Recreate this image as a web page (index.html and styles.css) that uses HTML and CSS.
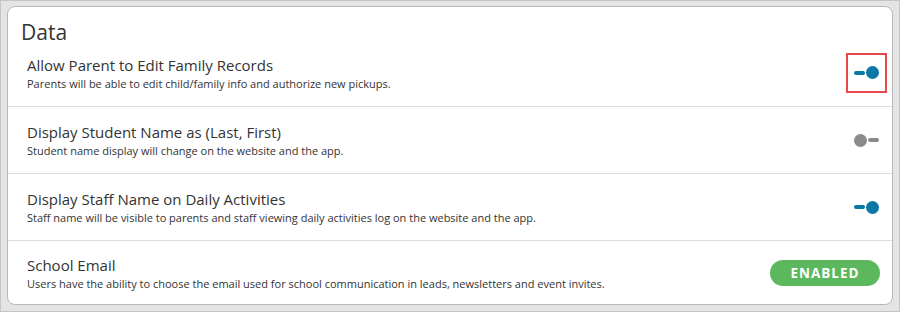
FILE: index.html
```html
<!DOCTYPE html>
<html>
<head>
<meta charset="utf-8">
<link rel="stylesheet" href="styles.css">
</head>
<body>
<div class="frame">
  <div class="card">
    <h2 class="title">Data</h2>
    <div class="row first">
      <div class="text">
        <div class="name">Allow Parent to Edit Family Records</div>
        <div class="desc">Parents will be able to edit child/family info and authorize new pickups.</div>
      </div>
      <div class="ctrl highlight">
        <span class="toggle on"><span class="bar"></span><span class="knob"></span></span>
      </div>
    </div>
    <div class="row">
      <div class="text">
        <div class="name">Display Student Name as (Last, First)</div>
        <div class="desc">Student name display will change on the website and the app.</div>
      </div>
      <div class="ctrl">
        <span class="toggle off"><span class="knob"></span><span class="bar"></span></span>
      </div>
    </div>
    <div class="row">
      <div class="text">
        <div class="name">Display Staff Name on Daily Activities</div>
        <div class="desc">Staff name will be visible to parents and staff viewing daily activities log on the website and the app.</div>
      </div>
      <div class="ctrl">
        <span class="toggle on"><span class="bar"></span><span class="knob"></span></span>
      </div>
    </div>
    <div class="row last">
      <div class="text">
        <div class="name">School Email</div>
        <div class="desc">Users have the ability to choose the email used for school communication in leads, newsletters and event invites.</div>
      </div>
      <div class="btnwrap">
        <span class="badge">ENABLED</span>
      </div>
    </div>
  </div>
</div>
</body>
</html>
```
FILE: styles.css
```css
html, body {
  margin: 0;
  padding: 0;
}
body {
  width: 900px;
  height: 312px;
  font-family: "Open Sans", "Liberation Sans", sans-serif;
  color: #333;
  background: #fff;
}
.frame {
  box-sizing: border-box;
  width: 900px;
  height: 312px;
  background: #e4e4e4;
  border: 1px solid #c4c4c4;
  padding: 5px 6px 6px 6px;
}
.card {
  box-sizing: border-box;
  height: 100%;
  background: #fff;
  border: 1px solid #b8b8b8;
  border-radius: 8px;
  overflow: hidden;
}
.title {
  box-sizing: border-box;
  margin: 0;
  padding: 12px 0 0 13px;
  height: 32px;
  font-weight: 400;
  font-size: 21px;
  line-height: 26px;
  color: #333;
}
.row {
  box-sizing: border-box;
  display: flex;
  align-items: center;
  justify-content: space-between;
  height: 67px;
  border-top: 1px solid #dcdcdc;
  padding: 0 0 0 19px;
}
.row.first {
  border-top: none;
}
.row.last {
  flex: 1;
  height: auto;
  min-height: 64px;
}
.text {
  display: flex;
  flex-direction: column;
  gap: 3px;
  padding-top: 1px;
}
.name {
  font-size: 15px;
  line-height: 18px;
  color: #333;
}
.desc {
  font-size: 11px;
  line-height: 14px;
  color: #333;
}
.ctrl {
  box-sizing: border-box;
  width: 41px;
  height: 40px;
  margin-right: 5px;
  display: flex;
  align-items: center;
  justify-content: center;
  border: 2px solid transparent;
}
.ctrl.highlight {
  border-color: #e8484a;
}
.toggle {
  display: flex;
  align-items: center;
}
.toggle .bar {
  width: 11px;
  height: 4px;
  border-radius: 2px;
}
.toggle .knob {
  width: 13px;
  height: 13px;
  border-radius: 50%;
}
.toggle.on .bar,
.toggle.on .knob {
  background: #0b78a6;
}
.toggle.on .bar { margin-right: 1px; }
.toggle.off .bar,
.toggle.off .knob {
  background: #8a8a8a;
}
.toggle.off .bar { margin-left: 1px; }
.btnwrap {
  margin-right: 12px;
}
.badge {
  display: inline-block;
  width: 110px;
  height: 26px;
  line-height: 26px;
  border-radius: 13px;
  background: #5cb85c;
  color: #fff;
  text-align: center;
  font-weight: 700;
  font-size: 13.5px;
  letter-spacing: 1px;
}
```
